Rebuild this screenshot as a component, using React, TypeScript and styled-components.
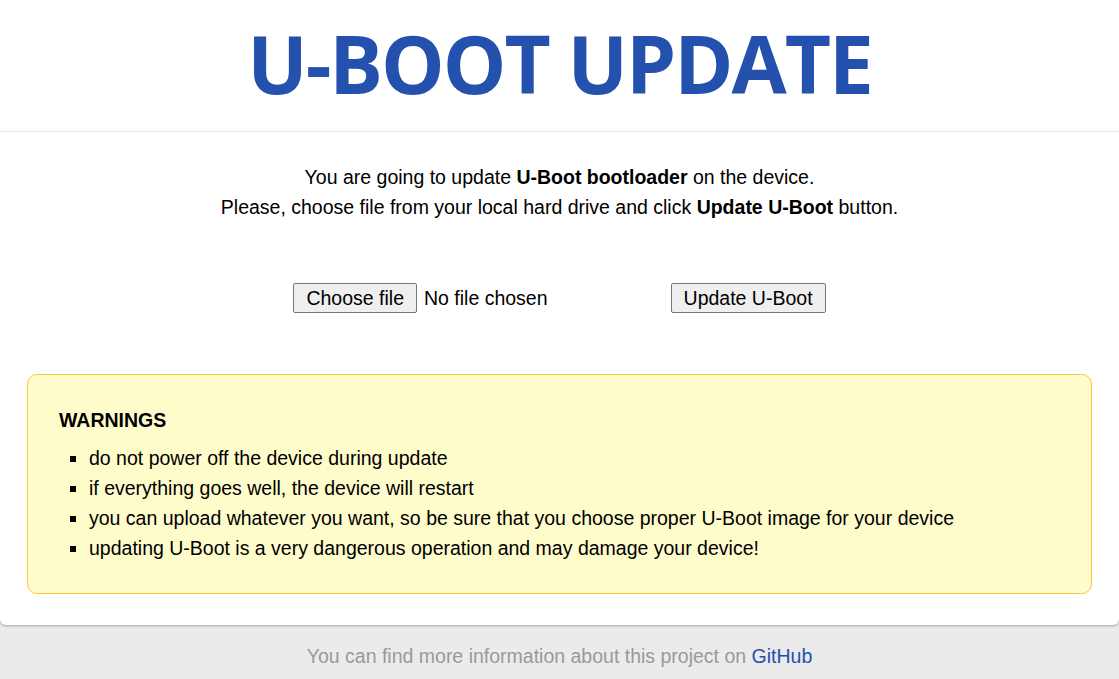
import styled, { createGlobalStyle } from 'styled-components';

const GlobalStyle = createGlobalStyle`
  html, body {
    margin: 0;
    padding: 0;
    background: #ebebeb;
    font-family: 'Liberation Sans', Arial, sans-serif;
    font-size: 19.5px;
    line-height: 30px;
    color: #000;
  }
`;

export default function App() {
    return (
        <>
            <GlobalStyle />
            <Page>
                <Header>
                    <Title>U-BOOT UPDATE</Title>
                </Header>
                <Content>
                    <Intro>
                        You are going to update <strong>U-Boot bootloader</strong> on the device.
                        <br />
                        Please, choose file from your local hard drive and click <strong>Update U-Boot</strong> button.
                    </Intro>
                    <UploadForm onSubmit={(e) => e.preventDefault()}>
                        <FileField>
                            <Button type="button">Choose file</Button>
                            <FileName>No file chosen</FileName>
                        </FileField>
                        <Button type="submit">Update U-Boot</Button>
                    </UploadForm>
                    <Warning>
                        <WarningTitle>WARNINGS</WarningTitle>
                        <WarningList>
                            <li>do not power off the device during update</li>
                            <li>if everything goes well, the device will restart</li>
                            <li>you can upload whatever you want, so be sure that you choose proper U-Boot image for your device</li>
                            <li>updating U-Boot is a very dangerous operation and may damage your device!</li>
                        </WarningList>
                    </Warning>
                </Content>
            </Page>
            <Footer>
                You can find more information about this project on <a href="#">GitHub</a>
            </Footer>
        </>
    );
}

const Page = styled.div`
    background: #fff;
    border-radius: 0 0 6px 6px;
    box-shadow: 0 1px 3px rgba(0, 0, 0, 0.3);
`;

const Header = styled.header`
    height: 131px;
    display: flex;
    align-items: center;
    justify-content: center;
    border-bottom: 1px solid #e5e5e5;
`;

const Title = styled.h1`
    margin: 0;
    font-family: 'Open Sans', 'Noto Sans', sans-serif;
    font-weight: 700;
    font-size: 80px;
    letter-spacing: -2px;
    line-height: 1;
    color: #2451ad;
    padding-bottom: 6px;
`;

const Content = styled.main`
    padding: 30px 27px 31px 27px;
    text-align: center;
`;

const Intro = styled.p`
    margin: 0;
`;

const UploadForm = styled.form`
    display: flex;
    justify-content: center;
    align-items: center;
    gap: 123px;
    margin: 61px 0 61px 0;
`;

const FileField = styled.div`
    display: flex;
    align-items: center;
    gap: 7px;
`;

const Button = styled.button`
    font-family: 'Liberation Sans', Arial, sans-serif;
    font-size: 19.5px;
    line-height: 22px;
    height: 30px;
    padding: 0 12px;
    color: #000;
    background: #efefef;
    border: 1px solid #767676;
    border-radius: 2px;
`;

const FileName = styled.span`
    line-height: 30px;
`;

const Warning = styled.section`
    text-align: left;
    background: #fffccc;
    border: 1px solid #fbc63c;
    border-radius: 10px;
    padding: 30px 31px 30px 31px;
`;

const WarningTitle = styled.h3`
    margin: 0 0 8px 0;
    font-size: 19.5px;
    line-height: 30px;
    font-weight: 700;
`;

const WarningList = styled.ul`
    margin: 0;
    padding-left: 30px;
    list-style: square;
`;

const Footer = styled.footer`
    text-align: center;
    color: #999;
    padding: 16px 0 8px;
    a {
        color: #2451ad;
        text-decoration: none;
    }
`;
